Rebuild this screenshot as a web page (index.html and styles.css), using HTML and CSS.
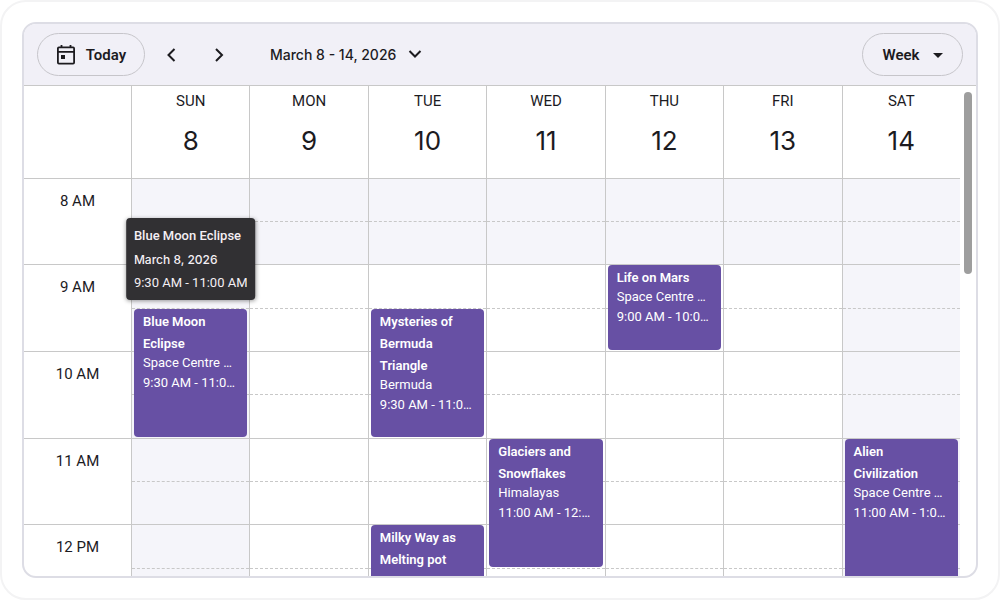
FILE: index.html
```html
<!DOCTYPE html>
<html lang="en">

<head>
    <meta charset="utf-8">
    <title>Scheduler</title>
    <link rel="stylesheet" href="styles.css">
</head>

<body>
    <main class="frame">
        <div class="scheduler">
            <div class="toolbar">
                <button type="button" class="pill today">
                    <svg width="20" height="22" viewBox="0 0 20 22" fill="none" stroke="#1c1b1f" stroke-width="1.8">
                        <path d="M5.5 1v3M14.5 1v3" />
                        <rect x="1.9" y="3.4" width="16.2" height="16.2" rx="1" />
                        <path d="M2 7.8h16" />
                        <rect x="5" y="11" width="4" height="4" fill="#1c1b1f" stroke="none" />
                    </svg>
                    Today
                </button>
                <button type="button" class="arrow" aria-label="Previous week">
                    <svg width="12" height="16" viewBox="0 0 12 16" fill="none" stroke="#1c1b1f" stroke-width="2">
                        <path d="M9.5 2l-6 6 6 6" />
                    </svg>
                </button>
                <button type="button" class="arrow" aria-label="Next week">
                    <svg width="12" height="16" viewBox="0 0 12 16" fill="none" stroke="#1c1b1f" stroke-width="2">
                        <path d="M3 2l6 6-6 6" />
                    </svg>
                </button>
                <button type="button" class="range">
                    March 8 - 14, 2026
                    <svg width="14" height="10" viewBox="0 0 14 10" fill="none" stroke="#1c1b1f" stroke-width="2">
                        <path d="M1.5 1l5.5 5.5L12.500 1" />
                    </svg>
                </button>
                <button type="button" class="pill view">
                    Week
                    <svg width="10" height="6" viewBox="0 0 10 6" fill="#1c1b1f">
                        <path d="M0 1h10L5 6z" />
                    </svg>
                </button>
            </div>

            <div class="calendar">
                <div class="grid days">
                    <div class="corner"></div>
                    <div class="day-name">SUN<span>8</span></div>
                    <div class="day-name">MON<span>9</span></div>
                    <div class="day-name">TUE<span>10</span></div>
                    <div class="day-name">WED<span>11</span></div>
                    <div class="day-name">THU<span>12</span></div>
                    <div class="day-name">FRI<span>13</span></div>
                    <div class="day-name">SAT<span>14</span></div>
                </div>

                <div class="grid hours">
                    <div class="times">
                        <div class="time">8 AM</div>
                        <div class="time">9 AM</div>
                        <div class="time">10 AM</div>
                        <div class="time">11 AM</div>
                        <div class="time">12 PM</div>
                    </div>
                    <div class="day weekend">
                        <div class="event from-930 long">
                            <b>Blue Moon Eclipse</b>
                            <span>Space Centre Auditorium</span>
                            <span>9:30 AM - 11:00 AM</span>
                            <div class="tooltip" role="tooltip">
                                <b>Blue Moon Eclipse</b>
                                <span class="date">March 8, 2026</span>
                                <span>9:30 AM - 11:00 AM</span>
                            </div>
                        </div>
                    </div>
                    <div class="day"></div>
                    <div class="day">
                        <div class="event from-930 long">
                            <b>Mysteries of Bermuda Triangle</b>
                            <span>Bermuda</span>
                            <span>9:30 AM - 11:00 AM</span>
                        </div>
                        <div class="event from-12 long">
                            <b>Milky Way as Melting pot</b>
                        </div>
                    </div>
                    <div class="day">
                        <div class="event from-11 long">
                            <b>Glaciers and Snowflakes</b>
                            <span>Himalayas</span>
                            <span>11:00 AM - 12:30 PM</span>
                        </div>
                    </div>
                    <div class="day">
                        <div class="event from-9 short">
                            <b>Life on Mars</b>
                            <span>Space Centre Auditorium</span>
                            <span>9:00 AM - 10:00 AM</span>
                        </div>
                    </div>
                    <div class="day"></div>
                    <div class="day weekend">
                        <div class="event from-11 longer">
                            <b>Alien Civilization</b>
                            <span>Space Centre Auditorium</span>
                            <span>11:00 AM - 1:00 PM</span>
                        </div>
                    </div>
                </div>
                <div class="scrollbar"></div>
            </div>
        </div>
    </main>
    <script>
        // half-hour cells behind the events
        var days = document.querySelectorAll('.day');
        for (var i = 0; i < days.length; i++) {
            for (var row = 10; row > 0; row--) {
                var slot = document.createElement('div');
                slot.className = row < 3 ? 'slot off' : 'slot';
                slot.style.gridRow = row;
                days[i].insertBefore(slot, days[i].firstChild);
            }
        }
    </script>
</body>

</html>
```
FILE: styles.css
```css
* {
    box-sizing: border-box;
}

body {
    margin: 0;
    background: #fff;
    color: #1c1b1f;
    font-family: Roboto, "Liberation Sans", sans-serif;
}

.frame {
    height: 100vh;
    padding: 20px;
    border: 2px solid #f3f3f4;
    border-radius: 26px;
}

.scheduler {
    display: flex;
    flex-direction: column;
    height: 100%;
    border: 2px solid #dddde5;
    border-radius: 14px;
    overflow: hidden;
}

.toolbar {
    display: flex;
    align-items: center;
    flex: none;
    height: 62px;
    padding: 0 13px;
    background: #f1f0f7;
    border-bottom: 1px solid #c8c8c8;
}

button {
    display: flex;
    align-items: center;
    justify-content: center;
    padding: 0;
    border: 0;
    background: none;
    color: #1c1b1f;
    font: 600 15px Roboto, "Liberation Sans", sans-serif;
    cursor: pointer;
}

.pill {
    height: 43px;
    border: 1px solid #c6c5ca;
    border-radius: 22px;
}

.today {
    gap: 10px;
    width: 108px;
    margin-right: 2px;
}

.view {
    gap: 13px;
    width: 101px;
    margin-left: auto;
}

.arrow {
    width: 48px;
    height: 40px;
}

.range {
    gap: 12px;
    margin-left: 27px;
    font: 500 14px Inter, Roboto, sans-serif;
}

.calendar {
    position: relative;
    flex: 1;
    min-height: 0;
    padding-right: 16px;
    overflow: hidden;
}

.grid {
    display: grid;
    grid-template-columns: 107px repeat(7, minmax(0, 1fr));
}

.days {
    height: 93px;
    border-bottom: 1px solid #c8c8c8;
}

.day-name {
    padding-top: 5px;
    border-left: 1px solid #c8c8c8;
    font-size: 15px;
    line-height: 20px;
    text-align: center;
}

.day-name span {
    display: block;
    margin-top: 14px;
    font-family: Inter, Roboto, sans-serif;
    font-size: 26px;
    line-height: 32px;
}

.times,
.day {
    display: grid;
    grid-auto-rows: 43px 43px 44px;
}

.time {
    grid-row: span 2;
    padding-top: 12px;
    border-bottom: 1px solid #c8c8c8;
    font-size: 15px;
    line-height: 20px;
    text-align: center;
}

.day {
    grid-template-columns: minmax(0, 1fr);
    border-left: 1px solid #c8c8c8;
}

.slot {
    grid-column: 1;
    border-bottom: 1px dashed #c8c8c8;
}

.slot:nth-child(even) {
    border-bottom-style: solid;
}

.off,
.weekend {
    background: #f5f5fa;
}

.event {
    position: relative;
    grid-column: 1;
    margin: 0 2px 2px;
    padding: 2px 12px 0 9px;
    border-radius: 4px;
    background: #6750a4;
    color: #fff;
    font-size: 13px;
}

.from-9 {
    grid-row-start: 3;
}

.from-930 {
    grid-row-start: 4;
}

.from-11 {
    grid-row-start: 7;
}

.from-12 {
    grid-row-start: 9;
}

.short {
    grid-row-end: span 2;
}

.long {
    grid-row-end: span 3;
}

.longer {
    grid-row-end: span 4;
}

.event b {
    display: block;
    margin-bottom: -2px;
    font-weight: 600;
    line-height: 22px;
}

.event span {
    display: block;
    overflow: hidden;
    line-height: 20px;
    text-overflow: ellipsis;
    white-space: nowrap;
}

.tooltip {
    position: absolute;
    bottom: 100%;
    left: 50%;
    z-index: 1;
    margin-bottom: 9px;
    padding: 5px 8px 6px;
    border-radius: 4px;
    background: #313033;
    box-shadow: 0 1px 4px rgba(0, 0, 0, 0.4);
    color: #f4eff4;
    white-space: nowrap;
    transform: translateX(-50%);
}

.event .tooltip b {
    margin: 0;
    font-weight: 500;
    line-height: 25px;
}

.event .tooltip span {
    line-height: 23px;
}

.tooltip .date {
    font-family: Inter, Roboto, sans-serif;
    font-size: 12px;
    font-weight: 500;
}

.scrollbar {
    position: absolute;
    top: 6px;
    right: 4px;
    width: 8px;
    height: 182px;
    border-radius: 4px;
    background: #9e9e9e;
}
```
